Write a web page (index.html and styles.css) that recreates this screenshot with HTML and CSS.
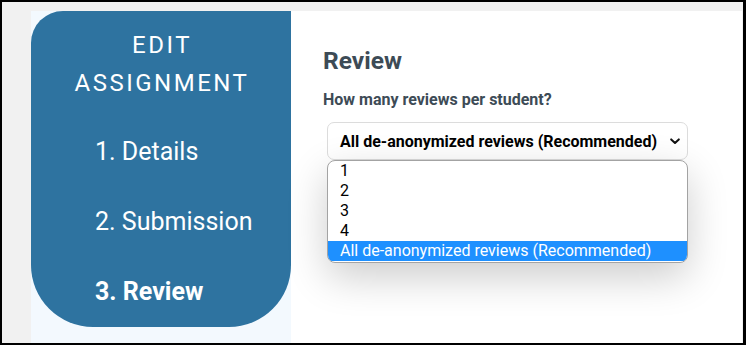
FILE: index.html
```html
<!DOCTYPE html>
<html lang="en">
<head>
<meta charset="utf-8">
<title>Edit Assignment</title>
<link rel="stylesheet" href="styles.css">
</head>
<body>
<div class="frame">
  <aside class="sidebar">
    <nav class="pill">
      <h1 class="title">EDIT<br>ASSIGNMENT</h1>
      <ul class="steps">
        <li class="step">1. Details</li>
        <li class="step">2. Submission</li>
        <li class="step active">3. Review</li>
      </ul>
    </nav>
  </aside>
  <main class="main">
    <h2 class="heading">Review</h2>
    <label class="label">How many reviews per student?</label>
    <div class="select-wrap">
      <div class="select">
        <span class="select-value">All de-anonymized reviews (Recommended)</span>
        <svg class="chevron" width="10" height="7" viewBox="0 0 10 7"><path d="M1.2 1.4 L5 5 L8.8 1.4" fill="none" stroke="#111" stroke-width="2" stroke-linecap="round" stroke-linejoin="round"/></svg>
      </div>
      <ul class="listbox">
        <li class="option">1</li>
        <li class="option">2</li>
        <li class="option">3</li>
        <li class="option">4</li>
        <li class="option selected">All de-anonymized reviews (Recommended)</li>
      </ul>
    </div>
  </main>
</div>
</body>
</html>
```
FILE: styles.css
```css
* { box-sizing: border-box; }
html, body { margin: 0; padding: 0; }
body {
  font-family: Roboto, "Noto Sans", Arial, sans-serif;
  background: #000;
}
.frame {
  width: 746px;
  height: 345px;
  border-style: solid;
  border-color: #000;
  border-width: 2px 3px 2px 2px;
  background: #f1f1f1;
  padding: 9px 1px 0 29px;
  display: flex;
  overflow: hidden;
}
.sidebar {
  width: 260px;
  flex: none;
  background: #f3f9fe;
}
.pill {
  height: 316px;
  background: #2e73a0;
  border-radius: 32px 0 62px 62px;
  color: #fff;
  padding-top: 15px;
}
.title {
  margin: 0;
  font-size: 24px;
  font-weight: 400;
  line-height: 38px;
  letter-spacing: 2.5px;
  text-align: center;
  padding-left: 2px;
}
.steps {
  list-style: none;
  margin: 35px 0 0;
  padding: 0 0 0 64px;
  display: flex;
  flex-direction: column;
  gap: 40px;
}
.step {
  font-size: 25px;
  line-height: 30px;
  font-weight: 400;
}
.step.active { font-weight: 700; }
.main {
  flex: 1;
  background: #fff;
  padding: 35px 0 0 32px;
  display: flex;
  flex-direction: column;
  align-items: flex-start;
}
.heading {
  margin: 0;
  font-size: 24.5px;
  line-height: 30px;
  font-weight: 700;
  color: #3d4b56;
}
.label {
  margin-top: 14px;
  font-size: 16px;
  line-height: 20px;
  font-weight: 700;
  color: #3d4b56;
}
.select-wrap {
  position: relative;
  margin: 12px 0 0 4px;
  width: 361px;
}
.select {
  height: 38px;
  border: 1px solid #dcdcdc;
  border-radius: 7px;
  background: #fff;
  display: flex;
  align-items: center;
  justify-content: space-between;
  padding: 0 7px 0 12px;
}
.select-value {
  font-size: 16px;
  font-weight: 700;
  color: #000;
}
.chevron { margin-top: 1px; }
.listbox {
  position: absolute;
  top: 38px;
  left: 0;
  width: 361px;
  margin: 0;
  padding: 0 0 1px;
  list-style: none;
  background: #fff;
  border: 1px solid #a3a3a3;
  border-radius: 8px;
  overflow: hidden;
  box-shadow: 0 14px 40px rgba(0, 0, 0, 0.2);
}
.option {
  font-size: 16px;
  line-height: 20px;
  color: #000;
  padding-left: 12px;
}
.option.selected {
  background: #1e90ff;
  color: #fff;
}
```
